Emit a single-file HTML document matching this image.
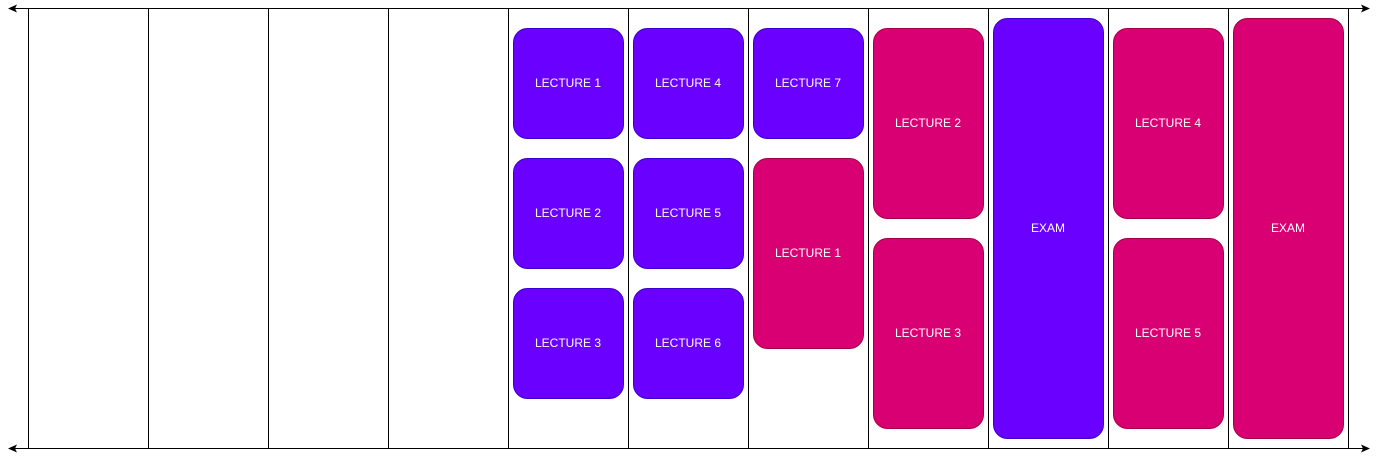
<!DOCTYPE html>
<html><head><style>body{margin:0;background:#fff}svg{display:block}text{font-family:"Liberation Sans",Helvetica,sans-serif;font-size:12px;fill:#fff;text-anchor:middle;dominant-baseline:central}</style></head><body>
<svg width="1379" height="459" xmlns="http://www.w3.org/2000/svg">
<g stroke="#000" stroke-width="1" shape-rendering="crispEdges">
<line x1="14" y1="8.5" x2="1364" y2="8.5"/>
<line x1="14" y1="448.5" x2="1364" y2="448.5"/>
<line x1="28.5" y1="8" x2="28.5" y2="448"/><line x1="148.5" y1="8" x2="148.5" y2="448"/><line x1="268.5" y1="8" x2="268.5" y2="448"/><line x1="388.5" y1="8" x2="388.5" y2="448"/><line x1="508.5" y1="8" x2="508.5" y2="448"/><line x1="628.5" y1="8" x2="628.5" y2="448"/><line x1="748.5" y1="8" x2="748.5" y2="448"/><line x1="868.5" y1="8" x2="868.5" y2="448"/><line x1="988.5" y1="8" x2="988.5" y2="448"/><line x1="1108.5" y1="8" x2="1108.5" y2="448"/><line x1="1228.5" y1="8" x2="1228.5" y2="448"/><line x1="1348.5" y1="8" x2="1348.5" y2="448"/>
</g>
<g fill="#000">
<path d="M8 8.5 L17 4.5 L15 8.5 L17 12.5Z"/><path d="M1370 8.5 L1361 4.5 L1363 8.5 L1361 12.5Z"/>
<path d="M8 448.5 L17 444.5 L15 448.5 L17 452.5Z"/><path d="M1370 448.5 L1361 444.5 L1363 448.5 L1361 452.5Z"/>
</g>
<g fill="#6a00ff" stroke="#3700cc">
<rect x="513.5" y="28.5" width="110" height="110" rx="14"/><rect x="513.5" y="158.5" width="110" height="110" rx="14"/><rect x="513.5" y="288.5" width="110" height="110" rx="14"/>
<rect x="633.5" y="28.5" width="110" height="110" rx="14"/><rect x="633.5" y="158.5" width="110" height="110" rx="14"/><rect x="633.5" y="288.5" width="110" height="110" rx="14"/>
<rect x="753.5" y="28.5" width="110" height="110" rx="14"/>
<rect x="993.5" y="18.5" width="110" height="420" rx="14"/>
</g>
<g fill="#d80073" stroke="#a50040">
<rect x="753.5" y="158.5" width="110" height="190" rx="14"/>
<rect x="873.5" y="28.5" width="110" height="190" rx="14"/><rect x="873.5" y="238.5" width="110" height="190" rx="14"/>
<rect x="1113.5" y="28.5" width="110" height="190" rx="14"/><rect x="1113.5" y="238.5" width="110" height="190" rx="14"/>
<rect x="1233.5" y="18.5" width="110" height="420" rx="14"/>
</g>
<text x="568" y="83">LECTURE 1</text><text x="568" y="213">LECTURE 2</text><text x="568" y="343">LECTURE 3</text>
<text x="688" y="83">LECTURE 4</text><text x="688" y="213">LECTURE 5</text><text x="688" y="343">LECTURE 6</text>
<text x="808" y="83">LECTURE 7</text><text x="808" y="253">LECTURE 1</text>
<text x="928" y="123">LECTURE 2</text><text x="928" y="333">LECTURE 3</text>
<text x="1048" y="228">EXAM</text>
<text x="1168" y="123">LECTURE 4</text><text x="1168" y="333">LECTURE 5</text>
<text x="1288" y="228">EXAM</text>
</svg>
</body></html>
